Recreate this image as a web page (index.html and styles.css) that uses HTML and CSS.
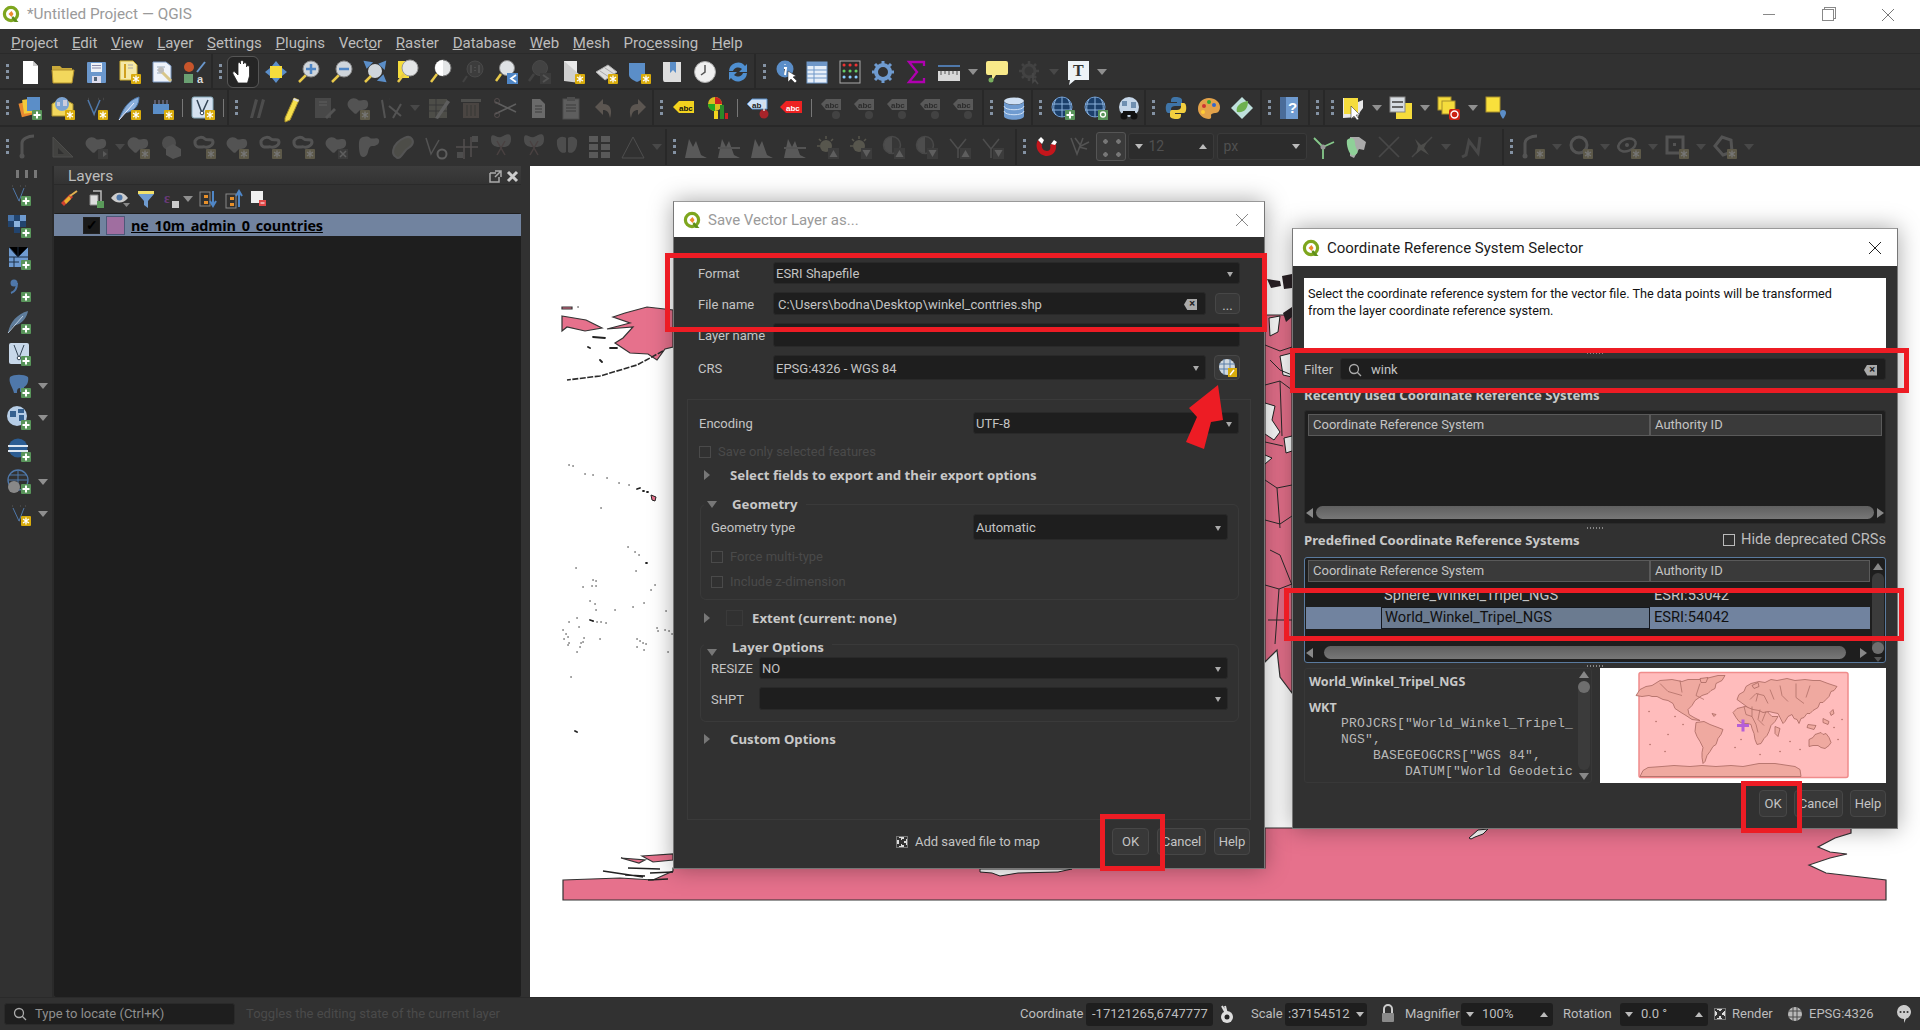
FILE: index.html
```html
<!DOCTYPE html>
<html lang="en">
<head>
<meta charset="utf-8">
<title>*Untitled Project — QGIS</title>
<link rel="stylesheet" href="styles.css">
</head>
<body>
<svg class="defs" aria-hidden="true">
<defs>
<g id="logo"><circle cx="9" cy="9" r="6.6" fill="#fff" stroke="#7ea61e" stroke-width="3.2"/><path d="M11 11l5.500 6h-4l-3-4z" fill="#5f8f1a"/><path d="M6.500 9l3-3 2 3-2 3z" fill="#ee8a2c"/></g>
<g id="bs"><rect x="14" y="14" width="10" height="10" rx="1" fill="#d9ac0c"/><path d="M19 15.500v7M16 17l6 4M22 17l-6 4" stroke="#fff" stroke-width="1.300"/></g>
<g id="bp"><rect x="14" y="14" width="10" height="10" rx="1" fill="#58945a"/><path d="M19 15.500v7M15.500 19h7" stroke="#fff" stroke-width="2"/></g>
<g id="new"><path d="M5 1h10l5 5v18H5z" fill="#fff"/><path d="M15 1l5 5h-5z" fill="#ccc"/></g>
<g id="open"><path d="M1 6h8l2 2h10v3H1z" fill="#c9a93a"/><path d="M1 10h22l-2 13H2z" fill="#f2d75c" stroke="#b3922c"/></g>
<g id="save"><rect x="3" y="2" width="19" height="21" rx="1" fill="#6a97cc"/><rect x="7" y="3" width="11" height="9" fill="#eef2f7"/><path d="M8 5.500h9M8 8h9" stroke="#88a"/><rect x="8" y="16" width="9" height="7" fill="#dde"/><rect x="10" y="17" width="3" height="4" fill="#567"/></g>
<g id="layout"><path d="M3 1h13l4 4v15H3z" fill="#f5e9a8" stroke="#d0b030"/><rect x="7" y="4" width="2" height="14" fill="#d0a020"/><path d="M11 5h5M11 8h5" stroke="#aaa"/><use href="#bs"/></g>
<g id="layoutm"><path d="M3 2h13l5 4v16H3z" fill="#eef3fb" stroke="#7a97c0"/><path d="M7 7h8M7 10h6M7 13h5" stroke="#9ab"/><path d="M10 10l11 11" stroke="#d8c68a" stroke-width="3"/><circle cx="11" cy="10" r="3" fill="#bbb"/></g>
<g id="stylem"><circle cx="6" cy="7" r="5" fill="#c7552b"/><path d="M14 12L22 2" stroke="#6a97cc" stroke-width="2"/><rect x="1" y="14" width="9" height="9" fill="#6aa072"/><text x="14" y="23" class="ict">a</text></g>
<g id="hand"><path d="M7 23l-5-9c-1-2 1-3 2-2l3 3V4c0-2 2.500-2 2.500 0V2c0-2 3-2 3 0v2c0-2 3-1.500 3 .5V7c0-2 3-1.500 3 0v9l-2 7z" fill="#fff" stroke="#222" stroke-width=".8"/></g>
<g id="pan"><rect x="6" y="6" width="12" height="12" fill="#f5dc3c"/><path d="M12 1l4 5H8zM12 23l4-5H8zM1 12l5-4v8zM23 12l-5-4v8z" fill="#5b8ec8"/></g>
<g id="zin"><path d="M9 15l-7 7" stroke="#e8c94a" stroke-width="2.500"/><circle cx="14" cy="9" r="8" fill="#cfd5db" stroke="#888"/><path d="M14 4v10M9 9h10" stroke="#4f86c6" stroke-width="2.500"/></g>
<g id="zout"><path d="M9 15l-7 7" stroke="#e8c94a" stroke-width="2.500"/><circle cx="14" cy="9" r="8" fill="#cfd5db" stroke="#888"/><path d="M9 9h10" stroke="#4f86c6" stroke-width="2.500"/></g>
<g id="zfull"><circle cx="12" cy="11" r="7" fill="#cfd5db"/><path d="M2 2l6 1-4 4zM22 2l-1 6-4-4zM22 21l-6-1 4-4z" fill="#5b8ec8" stroke="#5b8ec8" stroke-width="2"/><path d="M8 16l-6 6" stroke="#e8c94a" stroke-width="2.500"/></g>
<g id="zlayer"><rect x="2" y="1" width="11" height="17" fill="#f5dc3c"/><circle cx="14" cy="8" r="8" fill="#e3e5e6" stroke="#999"/><path d="M8 14l-6 8" stroke="#e8c94a" stroke-width="2.500"/></g>
<g id="zsel"><circle cx="14" cy="8" r="8" fill="#e3e5e6" stroke="#777"/><path d="M14 0a8 8 0 0 0 0 16z" fill="#fff"/><path d="M8 14l-6 8" stroke="#e8c94a" stroke-width="2.500"/></g>
<g id="z11"><circle cx="13" cy="9" r="8" fill="#555" stroke="#777"/><path d="M5 16l-4 6" stroke="#666" stroke-width="2"/><path d="M9 5v8M13 7v1M13 10v1M17 5v8" stroke="#999" stroke-width="1.600"/></g>
<g id="zlast"><circle cx="12" cy="8" r="7.500" fill="#dfe2e5" stroke="#888"/><path d="M6 14l-5 7" stroke="#e8c94a" stroke-width="2.500"/><rect x="12" y="13" width="11" height="11" fill="#4f86c6"/><path d="M21 15l-5 3.500 5 3.500" stroke="#fff" stroke-width="1.800" fill="none"/></g>
<g id="znext"><circle cx="12" cy="8" r="7.500" fill="#666" stroke="#777"/><path d="M6 14l-5 7" stroke="#666" stroke-width="2.500"/><rect x="12" y="13" width="11" height="11" fill="#555"/><path d="M15 15l5 3.500-5 3.500" stroke="#999" stroke-width="1.800" fill="none"/></g>
<g id="mapn"><path d="M3 1h13v14H3z" fill="#e9e9e9"/><path d="M3 1v20l16 2V15" fill="#cfcfcf"/><use href="#bs"/></g>
<g id="map3"><path d="M2 12L14 5l9 7-12 8z" fill="#ddd" stroke="#aaa"/><path d="M6 11l9 6M11 8l9 6" stroke="#aaa"/><use href="#bs"/></g>
<g id="shield"><path d="M2 3h16v12c0 4-8 7-8 7s-8-3-8-7z" fill="#5b8ec8"/><use href="#bs"/></g>
<g id="book"><path d="M3 2h18v20H5c-2 0-2-2-2-4z" fill="#dedede"/><path d="M10 2h6v11l-3-3-3 3z" fill="#5b8ec8"/></g>
<g id="clock"><circle cx="12" cy="12" r="10.500" fill="#f0f0f0" stroke="#aaa"/><path d="M12 5v7l-4 3" stroke="#555" stroke-width="1.500" fill="none"/></g>
<g id="refresh"><path d="M3 11a9 9 0 0 1 16-5l2-2v8h-8l3-3a5.500 5.500 0 0 0-9 2z" fill="#4f8fd0"/><path d="M21 13a9 9 0 0 1-16 5l-2 2v-8h8l-3 3a5.500 5.500 0 0 0 9-2z" fill="#4f8fd0"/></g>
<g id="ident"><circle cx="10" cy="9" r="8.500" fill="#5b8ec8"/><path d="M10 4v.500M9 8h2l-1 7" stroke="#fff" stroke-width="2"/><path d="M13 11v11l3-3 4 4 2-2-4-4 3-1z" fill="#fff" stroke="#222" stroke-width=".5"/></g>
<g id="table"><rect x="2" y="2" width="20" height="21" fill="#e6eef8" stroke="#6f97c8"/><rect x="2" y="2" width="20" height="4" fill="#6f97c8"/><path d="M2 10h20M2 14h20M2 18h20M9 6v17" stroke="#6f97c8"/></g>
<g id="calc"><rect x="2" y="1" width="20" height="22" fill="#2b2b2b" stroke="#aaa"/><path d="M6 5h.1M12 5h.1M18 5h.1" stroke="#e33" stroke-width="3" stroke-linecap="round"/><path d="M6 11h.1M12 11h.1M18 11h.1" stroke="#6c6" stroke-width="3" stroke-linecap="round"/><path d="M6 17h.1M12 17h.1M18 17h.1" stroke="#8cf" stroke-width="3" stroke-linecap="round"/></g>
<g id="gear"><circle cx="12" cy="12" r="7" fill="none" stroke="#6f9bd0" stroke-width="4"/><path d="M12 1v5M12 18v5M1 12h5M18 12h5M4 4l4 4M16 16l4 4M4 20l4-4M16 8l4-4" stroke="#6f9bd0" stroke-width="3"/></g>
<g id="sigma"><path d="M20 6V2H5l8 10-8 10h15v-4" fill="none" stroke="#b000b0" stroke-width="2.300"/></g>
<g id="ruler"><rect x="1" y="11" width="22" height="10" fill="#d8d8d8"/><path d="M4 11v4M8 11v3M12 11v4M16 11v3M20 11v4" stroke="#555"/><path d="M1 6h22" stroke="#4f78aa" stroke-width="2"/></g>
<g id="balloon"><path d="M3 1h18a2 2 0 0 1 2 2v10a2 2 0 0 1-2 2H11l-4 6v-6H3a2 2 0 0 1-2-2V3a2 2 0 0 1 2-2z" fill="#f8e989"/><circle cx="6" cy="20" r="2.500" fill="#7ab060"/></g>
<g id="gearo"><circle cx="11" cy="11" r="6" fill="#444" stroke="#666" stroke-width="3"/><path d="M11 1v3M11 18v3M1 11h3M18 11h3M4 4l2 2M16 16l2 2M4 18l2-2M16 6l2-2" stroke="#666" stroke-width="2.500"/><path d="M15 13v9l2-2 3 4" stroke="#777" stroke-width="1.600" fill="none"/></g>
<g id="tann"><path d="M2 1h21v19H9l-6 5 1-5H2z" fill="#eef3f7"/><text x="7" y="16" class="ics">T</text></g>
<g id="stack"><rect x="2" y="6" width="13" height="14" fill="#e88830" transform="rotate(-14 8 13)"/><rect x="5" y="3" width="13" height="14" fill="#f2cb3b" transform="rotate(-8 11 10)"/><rect x="9" y="1" width="13" height="14" fill="#5b8ec8"/><use href="#bp"/></g>
<g id="gpkg"><path d="M1 8l10-6 11 6v12H1z" fill="#f2d75c" stroke="#a88f2c"/><circle cx="11" cy="8" r="7" fill="#7ca3d2"/><path d="M6 6h3v4H6zM12 4h4v6h-4z" fill="#ccd"/><use href="#bs"/></g>
<g id="vnew"><path d="M4 4l6 14 6-14" fill="none" stroke="#4f78aa" stroke-width="1.500"/><path d="M4 3h.1M14 3h.1M19 3h.1M10 19h.1" stroke="#fff" stroke-width="2.500"/><use href="#bs"/></g>
<g id="feather"><path d="M2 24C6 12 12 4 22 1c0 8-4 14-14 16" fill="#8ab0dc" stroke="#4f78aa"/><path d="M2 24L17 7" stroke="#eef"/><use href="#bs"/></g>
<g id="chip"><rect x="3" y="8" width="16" height="10" fill="#5b8ec8"/><path d="M5 4v4M9 4v4M13 4v4M17 4v4" stroke="#88a" /><use href="#bs"/></g>
<g id="vmesh"><rect x="1" y="1" width="21" height="21" rx="2" fill="#d5e2f0" stroke="#8ab"/><path d="M6 4l5 13 6-13" fill="none" stroke="#345" stroke-width="1.500"/><circle cx="11" cy="17" r="1.800" fill="#fff" stroke="#345"/><use href="#bs"/></g>
<g id="pencils"><path d="M3 22L8 3l3 1-5 18zM10 22L15 3l3 1-5 18z" fill="#888"/></g>
<g id="pencil"><path d="M5 22L14 2l5 2-9 20-5 2z" fill="#f5df4c" stroke="#a88f2c"/><path d="M14 2l5 2-1 2-5-2z" fill="#ddd"/></g>
<g id="saved"><rect x="2" y="2" width="16" height="20" fill="#777"/><path d="M6 6h8M6 9h8" stroke="#bbb"/><path d="M12 21l9-9 2 2-9 9z" fill="#999"/></g>
<g id="blob"><path d="M2 6c3-5 8-4 10-2s9-3 10 3-4 7-7 7-4 6-7 3-8-6-6-11z" fill="#999"/></g>
<g id="blobs"><use href="#blob"/><use href="#bs"/></g>
<g id="tools"><path d="M3 4h.1M10 3h.1" stroke="#999" stroke-width="2"/><path d="M3 4l3 18M14 22L22 8M10 10l12 10" stroke="#999" stroke-width="2"/></g>
<g id="edits"><rect x="2" y="3" width="18" height="19" fill="#8a8a5a"/><path d="M2 9h18M2 15h18M9 3v19" stroke="#444"/><path d="M8 22L20 4l3 2-12 17z" fill="#bbb"/></g>
<g id="del"><rect x="3" y="7" width="16" height="15" fill="#9a6a4a"/><rect x="1" y="3" width="20" height="3" fill="#8a8a7a"/><path d="M7 9v11M11 9v11M15 9v11" stroke="#443"/></g>
<g id="cut"><path d="M2 6l21 10M2 18L23 8" stroke="#bbb" stroke-width="1.500"/><circle cx="4" cy="5" r="2.500" fill="none" stroke="#c77" /><circle cx="4" cy="19" r="2.500" fill="none" stroke="#c77"/></g>
<g id="copy"><path d="M6 3h8l5 5v14H6z" fill="#ddd"/><path d="M9 10h7M9 13h7M9 16h7" stroke="#555"/></g>
<g id="paste"><rect x="4" y="3" width="16" height="20" fill="#bbb" stroke="#888"/><rect x="8" y="1" width="8" height="4" fill="#888"/><path d="M7 9h10M7 12h10M7 15h10" stroke="#555"/></g>
<g id="undo"><path d="M11 3L3 11l8 8v-5c4 0 6 2 7 8 2-6 2-14-7-14z" fill="#d89a6a"/></g>
<g id="redo"><path d="M13 3l8 8-8 8v-5c-4 0-6 2-7 8-2-6-2-14 7-14z" fill="#d89a6a"/></g>
<g id="labely"><path d="M1 11l6-6h15v12H7z" fill="#f2d21e"/><text x="7" y="15" class="icb">abc</text></g>
<g id="chart"><circle cx="10" cy="8" r="7" fill="#d8c020"/><path d="M10 1a7 7 0 0 1 7 7h-7z" fill="#c22"/><path d="M3 8a7 7 0 0 0 7 7V8z" fill="#2a2"/><rect x="9" y="15" width="4" height="8" fill="#f2d21e"/><rect x="15" y="9" width="4" height="14" fill="#2a8a2a"/><rect x="20" y="17" width="3" height="6" fill="#c22"/></g>
<g id="labelb"><path d="M1 8l5-5h15v10H6z" fill="#cfe0f4" stroke="#5b8ec8"/><text x="6" y="12" class="icc">ab</text><circle cx="18" cy="18" r="4.500" fill="#a8242a"/><path d="M18 6v9" stroke="#ddd" stroke-width="1.500"/></g>
<g id="labelr"><path d="M1 11l6-6h16v12H7z" fill="#ee2222"/><text x="7" y="15" class="icw">abc</text></g>
<g id="labeld"><path d="M1 8l5-5h15v11H6z" fill="#aaa"/><text x="5" y="12" class="icc">abc</text><circle cx="16" cy="19" r="4" fill="#666"/></g>
<g id="db"><ellipse cx="12" cy="5" rx="10" ry="3.500" fill="#cfe0f4"/><path d="M2 5v15c0 5 20 5 20 0V5c0 5-20 5-20 0z" fill="#6f9bd0"/><path d="M2 10c0 5 20 5 20 0M2 15c0 5 20 5 20 0" stroke="#cfe0f4" fill="none"/></g>
<g id="wms"><circle cx="11" cy="11" r="10" fill="#1b3f6a" stroke="#6f9bd0"/><path d="M1 8h20M1 14h20M11 1v20M5 3c-3 6-3 12 0 16M17 3c3 6 3 12 0 16" stroke="#8cb3dd" fill="none"/></g>
<g id="wmsp"><use href="#wms"/><use href="#bp"/></g>
<g id="wmsq"><use href="#wms"/><rect x="14" y="14" width="10" height="10" fill="#58945a"/><circle cx="19" cy="18.500" r="2.500" fill="none" stroke="#fff" stroke-width="1.300"/></g>
<g id="wbin"><circle cx="12" cy="11" r="10" fill="#c5d6e8"/><path d="M5 5h5v5H5zM14 6h5v6h-5z" fill="#6f8fb0"/><circle cx="7" cy="20" r="3.500" fill="#111"/><circle cx="17" cy="20" r="3.500" fill="#111"/><rect x="6" y="15" width="12" height="4" fill="#111"/></g>
<g id="python"><path d="M12 1c-5 0-5 2-5 5h6v1H4c-3 0-3 10 0 10h3v-4c0-2 2-3 4-3h5c2 0 2-2 2-3V4c0-2-3-3-6-3z" fill="#3f75a8"/><path d="M12 23c5 0 5-2 5-5h-6v-1h9c3 0 3-10 0-10h-3v4c0 2-2 3-4 3H8c-2 0-2 2-2 3v3c0 2 3 3 6 3z" fill="#f2cf3f"/></g>
<g id="palette"><path d="M12 2C5 2 1 7 1 13s6 10 11 10c3 0 2-3 2-4s2-2 4-2 5-1 5-6c0-5-5-9-11-9z" fill="#e2a24a"/><circle cx="7" cy="10" r="2" fill="#c33"/><circle cx="12" cy="6" r="2" fill="#3a3"/><circle cx="17" cy="9" r="2" fill="#36c"/><circle cx="6" cy="16" r="2" fill="#fc3"/></g>
<g id="leaf"><path d="M12 1l11 11-11 11L1 12z" fill="#bfe0dc"/><path d="M7 16c-2-6 4-10 11-11 0 7-3 12-11 11z" fill="#6db04f"/></g>
<g id="help"><rect x="0" y="1" width="7" height="22" fill="#4a6c99"/><rect x="6" y="1" width="12" height="22" fill="#6f9bd0"/><text x="8" y="17" class="icw2">?</text></g>
<g id="selt"><path d="M2 2h15v4l5-2v8l-3 4-2 5-15 1z" fill="#e8e8e8"/><rect x="3" y="2" width="14" height="16" fill="#f5dc3c"/><path d="M10 10v13l3-3 3 4 2-1-3-4h4z" fill="#fff" stroke="#222" stroke-width=".5"/></g>
<g id="seltb"><rect x="7" y="7" width="16" height="16" fill="#f5dc3c"/><rect x="1" y="1" width="15" height="15" fill="#d8dde2" stroke="#888"/><path d="M3 6h11M3 11h11" stroke="#666" stroke-width="2"/></g>
<g id="desel"><rect x="1" y="1" width="13" height="13" fill="#f5dc3c" stroke="#a88f2c"/><rect x="5" y="5" width="13" height="13" fill="#f5dc3c" stroke="#a88f2c"/><rect x="12" y="13" width="11" height="11" rx="2" fill="#c21"/><circle cx="17.500" cy="18.500" r="3.500" fill="none" stroke="#fff" stroke-width="1.400"/></g>
<g id="selloc"><rect x="1" y="1" width="14" height="15" fill="#f9e03c" stroke="#a88f2c"/><path d="M18 14a3 3 0 0 1 3 3c0 2-3 6-3 6s-3-4-3-6a3 3 0 0 1 3-3z" fill="#5b8ec8"/></g>
<g id="dig"><path d="M4 22V8c0-4 6-7 12-7" fill="none" stroke="#999" stroke-width="3"/><circle cx="4" cy="21" r="2.500" fill="#999"/></g>
<g id="digs"><use href="#dig"/><use href="#bs"/></g>
<g id="ruler2"><path d="M2 2v20h20z" fill="#665" stroke="#887"/><path d="M7 13v6h6z" fill="#2e2e2e"/></g>
<g id="arrowb"><use href="#blob"/><rect x="14" y="14" width="10" height="10" fill="#555"/><path d="M15 19h4v-3l4 3-4 3v-3" fill="#aaa"/></g>
<g id="hexa"><circle cx="10" cy="8" r="7" fill="#888"/><path d="M14 9l8 5v7l-8 3-7-4v-7z" fill="#999"/></g>
<g id="ring"><path d="M3 6c3-5 8-4 10-2s8-1 8 3-6 6-8 5-11 3-10-6z" fill="none" stroke="#999" stroke-width="3"/><use href="#bs"/></g>
<g id="blobx"><use href="#blob"/><rect x="14" y="14" width="10" height="10" fill="#555"/><path d="M16 16l6 6M22 16l-6 6" stroke="#bbb" stroke-width="1.500"/></g>
<g id="blobsp"><path d="M3 4c3-3 8-3 10-1s8-2 9 2-3 6-6 6-4 1-5 6-5 6-7 4-3-14-1-17z" fill="#999"/></g>
<g id="bean"><path d="M6 22c-5-3-3-10 1-14s12-9 15-4-2 8-5 10-7 12-11 8z" fill="#8a8a5a" stroke="#999" stroke-width="2"/></g>
<g id="vrot"><path d="M3 3l5 16 8-14M8 19" fill="none" stroke="#999" stroke-width="1.500"/><circle cx="19" cy="19" r="4.500" fill="none" stroke="#bbb" stroke-width="2"/></g>
<g id="trim"><path d="M0 12h22M8 4v20M15 2v20" stroke="#a88" stroke-width="1.500"/><rect x="1" y="17" width="6" height="6" fill="#888"/><rect x="16" y="1" width="6" height="6" fill="#888"/></g>
<g id="scis"><path d="M2 4c0 8 6 8 10 8s10 0 10-8-6-4-10-2S2-4 2 4z" fill="#888"/><path d="M8 6l8 14M16 6L8 20" stroke="#a55" stroke-width="1.500"/></g>
<g id="merge"><path d="M2 5c3-5 8-3 9-2v14c-4 3-10-2-9-12zM22 5c-3-5-8-3-9-2v14c4 3 10-2 9-12z" fill="#888"/></g>
<g id="grid"><rect x="1" y="1" width="9" height="6" fill="#aaa"/><rect x="13" y="1" width="9" height="6" fill="#aaa"/><rect x="1" y="9" width="9" height="6" fill="#aaa"/><rect x="13" y="9" width="9" height="6" fill="#aaa"/><rect x="1" y="17" width="9" height="6" fill="#aaa"/><rect x="13" y="17" width="9" height="6" fill="#aaa"/></g>
<g id="tri"><path d="M12 2L1 23h22z" fill="none" stroke="#888"/></g>
<g id="hist"><path d="M1 23L5 4l4 8 3-6 5 14 6 3z" fill="#aaa"/></g>
<g id="histx"><use href="#hist"/><path d="M1 13h22" stroke="#999" stroke-width="2"/></g>
<g id="sun"><circle cx="10" cy="11" r="6" fill="#b2a34a"/><path d="M10 1v3M1 11h3M3 4l2 2M17 4l-2 2" stroke="#b2a34a" stroke-width="1.500"/><rect x="12" y="13" width="11" height="11" fill="#555"/><path d="M17.500 15l4 7h-8z" fill="#bbb"/></g>
<g id="sund"><use href="#sun"/><rect x="12" y="13" width="11" height="11" fill="#555"/><path d="M17.500 22l4-7h-8z" fill="#bbb"/></g>
<g id="cont"><circle cx="10" cy="10" r="8.500" fill="#444" stroke="#777" stroke-width="1.500"/><path d="M10 2a8 8 0 0 0 0 16z" fill="#888"/><rect x="12" y="13" width="11" height="11" fill="#555"/><path d="M17.500 15l4 7h-8z" fill="#bbb"/></g>
<g id="contd"><use href="#cont"/><rect x="12" y="13" width="11" height="11" fill="#555"/><path d="M17.500 22l4-7h-8z" fill="#bbb"/></g>
<g id="gamma"><path d="M2 4l8 10v9M18 4l-8 10" fill="none" stroke="#888" stroke-width="1.500"/><rect x="12" y="13" width="11" height="11" fill="#555"/><path d="M17.500 15l4 7h-8z" fill="#bbb"/></g>
<g id="gammad"><use href="#gamma"/><rect x="12" y="13" width="11" height="11" fill="#555"/><path d="M17.500 22l4-7h-8z" fill="#bbb"/></g>
<g id="magnet"><path d="M4 5c-4 7 1 16 9 16s11-9 8-14l-5 3c1 3 0 6-3 6s-6-3-5-6z" fill="#c4161c"/><path d="M4 5l4 4 2-4-3-3zM20 5l-3 4 4 1 2-3z" fill="#fff"/></g>
<g id="trace"><path d="M4 3l6 16 6-16M8 3l6 8 8-4M12 12l8 2" fill="none" stroke="#999" stroke-width="1.500"/></g>
<g id="yfork"><path d="M12 12V24M12 12L3 3M12 12l11-5" stroke="#86c98b" stroke-width="1.800"/><circle cx="12" cy="12" r="2.500" fill="#999"/></g>
<g id="split"><path d="M6 2h9l7 5-2 8-5-1-5 9-4-2z" fill="#aaa"/><path d="M3 5c3-3 8-3 8 3s6 9 0 12-9-11-8-15z" fill="#8fd098"/></g>
<g id="xx"><path d="M2 2l20 20M22 2L2 22" stroke="#777" stroke-width="1.700"/></g>
<g id="xxb"><path d="M2 22L22 2" stroke="#777" stroke-width="1.500"/><path d="M5 4l6 6 6-3-3 6 5 7-8-5-5 4 2-8z" fill="#887"/></g>
<g id="zz"><path d="M4 22l4-2 3-14 9 12 2-16" fill="none" stroke="#777" stroke-width="3"/></g>
<g id="circ"><circle cx="10" cy="10" r="8" fill="none" stroke="#999" stroke-width="3"/><use href="#bs"/></g>
<g id="ell"><ellipse cx="10" cy="10" rx="9" ry="6" fill="none" stroke="#999" stroke-width="2.500" transform="rotate(-20 10 10)"/><circle cx="10" cy="10" r="2" fill="#999"/><use href="#bs"/></g>
<g id="rect"><rect x="2" y="2" width="16" height="16" fill="none" stroke="#999" stroke-width="3"/><rect x="8" y="8" width="3" height="3" fill="#999"/><use href="#bs"/></g>
<g id="poly"><path d="M2 11l7-9 9 3 1 12-9 3z" fill="none" stroke="#999" stroke-width="3"/><use href="#bs"/></g>
<g id="l-style"><path d="M1 13l9-9 3 3-9 9z" fill="#d04030"/><path d="M4 11l5-5 2 3-5 5z" fill="#e8b030"/><path d="M10 6l7-5" stroke="#e0b050" stroke-width="2"/></g>
<g id="l-add"><path d="M4 5h8v10H4z" fill="#ddd" stroke="#888"/><path d="M7 1h8v11" fill="none" stroke="#bbb" stroke-width="1.500"/><rect x="11" y="11" width="7" height="7" fill="#5a9a5a"/></g>
<g id="l-eye"><path d="M0 8c5-7 12-7 17 0-5 6-12 6-17 0z" fill="#ccc"/><circle cx="8.500" cy="7.500" r="3" fill="#4f78aa"/><path d="M12 13h7l-3.500 4z" fill="#888"/></g>
<g id="l-fil"><path d="M1 1h16v3l-6 7v7l-4-3v-4L1 4z" fill="#6f9bd0"/><path d="M1 1h16v3H1z" fill="#f2e06a"/></g>
<g id="l-expr"><text x="2" y="13" class="icp">ε</text><rect x="10" y="11" width="7" height="7" fill="#ccc"/></g>
<g id="l-exp"><rect x="1" y="2" width="10" height="14" fill="none" stroke="#888"/><rect x="5" y="5" width="4" height="3" fill="#e8902a"/><rect x="5" y="11" width="4" height="3" fill="#e8902a"/><path d="M14 1v14M11 11l3 5 3-5" stroke="#4f86c6" stroke-width="2" fill="none"/></g>
<g id="l-col"><rect x="1" y="4" width="10" height="14" fill="none" stroke="#888"/><rect x="5" y="7" width="4" height="3" fill="#e8902a"/><rect x="5" y="13" width="4" height="3" fill="#e8902a"/><path d="M14 17V3M11 6l3-5 3 5" stroke="#4f86c6" stroke-width="2" fill="none"/></g>
<g id="l-rem"><rect x="1" y="1" width="12" height="12" fill="#eee"/><rect x="9" y="10" width="7" height="6" fill="#e04848"/><path d="M10.500 13h4" stroke="#fff"/></g>
<g id="a-pt"><path d="M6 6l6 13 5-13" fill="none" stroke="#4f78aa" stroke-width="1"/><path d="M5 4h.1M13 4h.1M18 4h.1M12 19h.1" stroke="#fff" stroke-width="2"/><use href="#bp"/></g>
<g id="a-ras"><rect x="1" y="1" width="6" height="6" fill="#4a76ac"/><rect x="7" y="1" width="6" height="6" fill="#22446e"/><rect x="13" y="1" width="6" height="6" fill="#6f9bd0"/><rect x="1" y="7" width="6" height="6" fill="#22446e"/><rect x="7" y="7" width="6" height="6" fill="#8cb3dd"/><rect x="13" y="7" width="6" height="6" fill="#22446e"/><rect x="7" y="13" width="6" height="6" fill="#22446e"/><use href="#bp"/></g>
<g id="a-mesh"><rect x="2" y="1" width="19" height="20" fill="#6f9bd0"/><path d="M2 1l9 10 10-10M11 1v10M2 11h19M2 16h10M7 11v10" stroke="#1d2f44"/><use href="#bp"/></g>
<g id="a-txt"><circle cx="7" cy="5" r="3.500" fill="#4f78aa"/><path d="M10 5c0 6-3 9-6 10" stroke="#4f78aa" stroke-width="2" fill="none"/><use href="#bp"/></g>
<g id="a-spat"><path d="M1 23C3 12 10 4 21 1c-1 6-5 13-15 15" fill="#5f7d9c"/><path d="M1 23L16 6" stroke="#bcd"/><use href="#bp"/></g>
<g id="a-vm"><rect x="2" y="1" width="20" height="21" rx="2" fill="#c8d8ea"/><path d="M7 3l5 13 5-13" fill="none" stroke="#345"/><circle cx="12" cy="16" r="1.800" fill="#fff" stroke="#345"/><use href="#bp"/></g>
<g id="a-pg"><path d="M3 3c4-3 14-3 18 0 1 4-1 9-4 10v5h-4v-4c-3 0-3 3-3 5H7c-1-5-6-11-4-16z" fill="#4f78aa"/><use href="#bp"/></g>
<g id="a-glob"><circle cx="10" cy="10" r="10" fill="#b6cde6"/><path d="M3 5h6v6H3zM11 3h6v4h-6zM12 9h5v6h-5z" fill="#35608f"/><use href="#bp"/></g>
<g id="a-wfs"><circle cx="11" cy="10" r="9.500" fill="#2c5d93"/><path d="M1 7h20v2H1zM1 12h20v2H1z" fill="#dfe8f2"/><use href="#bp"/></g>
<g id="a-wcs"><circle cx="11" cy="10" r="10" fill="none" stroke="#4f78aa" stroke-width="1.300"/><path d="M1 10h20M11 0v20M2 5h18" stroke="#4f78aa"/><circle cx="7" cy="17" r="6" fill="#888"/><use href="#bp"/></g>
<g id="a-new"><path d="M6 6l6 13 5-13" fill="none" stroke="#4f78aa" stroke-width="1"/><path d="M5 4h.1M13 4h.1M18 4h.1M12 19h.1" stroke="#fff" stroke-width="2"/><use href="#bs"/></g>
<g id="crs"><circle cx="9" cy="9" r="8" fill="#cfd8e0"/><path d="M1 6h16M1 11h16M6 1v16M12 1v16" stroke="#5b7fa8"/><rect x="10" y="10" width="9" height="9" fill="#d9ac0c"/><path d="M12 17l4-5" stroke="#fff" stroke-width="1.500"/></g>
</defs>
</svg>

<div class="app">
<header class="titlebar">
<svg class="logo"><use href="#logo"/></svg>
<span class="wintitle">*Untitled Project — QGIS</span>
<div class="winbtns">
<span class="wmin"></span>
<span class="wmax"></span>
<svg class="wclose"><path d="M1 1l12 12M13 1L1 13"/></svg>
</div>
</header>
<nav class="menu">
<span><u>P</u>roject</span><span><u>E</u>dit</span><span><u>V</u>iew</span><span><u>L</u>ayer</span><span><u>S</u>ettings</span><span><u>P</u>lugins</span><span>Vect<u>o</u>r</span><span><u>R</u>aster</span><span><u>D</u>atabase</span><span><u>W</u>eb</span><span><u>M</u>esh</span><span>Pro<u>c</u>essing</span><span><u>H</u>elp</span>
</nav>

<div class="tb t1">
<i class="h"></i><svg class="i"><use href="#new"/></svg><svg class="i"><use href="#open"/></svg><svg class="i"><use href="#save"/></svg><svg class="i"><use href="#layout"/></svg><svg class="i"><use href="#layoutm"/></svg><svg class="i"><use href="#stylem"/></svg>
<i class="sep"></i><i class="h"></i>
<svg class="i act"><use href="#hand"/></svg><svg class="i"><use href="#pan"/></svg><svg class="i"><use href="#zin"/></svg><svg class="i"><use href="#zout"/></svg><svg class="i"><use href="#zfull"/></svg><svg class="i"><use href="#zlayer"/></svg><svg class="i"><use href="#zsel"/></svg><svg class="i off"><use href="#z11"/></svg><svg class="i"><use href="#zlast"/></svg><svg class="i off"><use href="#znext"/></svg><svg class="i"><use href="#mapn"/></svg><svg class="i"><use href="#map3"/></svg><svg class="i"><use href="#shield"/></svg><svg class="i"><use href="#book"/></svg><svg class="i"><use href="#clock"/></svg><svg class="i"><use href="#refresh"/></svg>
<i class="sep"></i><i class="h m1"></i>
<svg class="i"><use href="#ident"/></svg><svg class="i m2"><use href="#table"/></svg><svg class="i"><use href="#calc"/></svg><svg class="i"><use href="#gear"/></svg><svg class="i"><use href="#sigma"/></svg><svg class="i"><use href="#ruler"/></svg><i class="d"></i><svg class="i"><use href="#balloon"/></svg><svg class="i off"><use href="#gearo"/></svg><i class="d dim"></i><svg class="i"><use href="#tann"/></svg><i class="d"></i>
</div>

<div class="tb t2">
<i class="h"></i><svg class="i"><use href="#stack"/></svg><svg class="i"><use href="#gpkg"/></svg><svg class="i"><use href="#vnew"/></svg><svg class="i"><use href="#feather"/></svg><svg class="i"><use href="#chip"/></svg><i class="t"></i><svg class="i"><use href="#vmesh"/></svg><i class="t"></i>
<i class="sep"></i><i class="h"></i>
<svg class="i off"><use href="#pencils"/></svg><svg class="i"><use href="#pencil"/></svg><svg class="i off"><use href="#saved"/></svg><svg class="i off"><use href="#blobs"/></svg><svg class="i off"><use href="#tools"/></svg><i class="d dim"></i><svg class="i off"><use href="#edits"/></svg><svg class="i off"><use href="#del"/></svg><svg class="i off"><use href="#cut"/></svg><svg class="i off"><use href="#copy"/></svg><svg class="i off"><use href="#paste"/></svg><svg class="i off"><use href="#undo"/></svg><svg class="i off"><use href="#redo"/></svg>
<i class="sep mn"></i><i class="h"></i>
<svg class="i"><use href="#labely"/></svg><svg class="i"><use href="#chart"/></svg><i class="t"></i><svg class="i"><use href="#labelb"/></svg><svg class="i"><use href="#labelr"/></svg><i class="t"></i><svg class="i off"><use href="#labeld"/></svg><svg class="i off"><use href="#labeld"/></svg><svg class="i off"><use href="#labeld"/></svg><svg class="i off"><use href="#labeld"/></svg><svg class="i off"><use href="#labeld"/></svg>
<i class="sep m2"></i><i class="h"></i>
<svg class="i"><use href="#db"/></svg>
<i class="sep m1"></i><i class="h"></i>
<svg class="i"><use href="#wmsp"/></svg><svg class="i"><use href="#wmsq"/></svg><svg class="i"><use href="#wbin"/></svg>
<i class="sep mn"></i><i class="h"></i>
<svg class="i"><use href="#python"/></svg><svg class="i"><use href="#palette"/></svg><svg class="i"><use href="#leaf"/></svg>
<i class="sep m2"></i><i class="h"></i>
<svg class="i"><use href="#help"/></svg>
<i class="sep"></i><i class="h"></i><i class="sep"></i><i class="h"></i>
<svg class="i nm"><use href="#selt"/></svg><i class="d"></i><svg class="i"><use href="#seltb"/></svg><i class="d"></i><svg class="i"><use href="#desel"/></svg><i class="d"></i><svg class="i"><use href="#selloc"/></svg>
</div>

<div class="tb t3">
<i class="h"></i><svg class="i off"><use href="#dig"/></svg><svg class="i off"><use href="#ruler2"/></svg><svg class="i off"><use href="#arrowb"/></svg><i class="d dim"></i><svg class="i off nl"><use href="#blobs"/></svg><svg class="i off"><use href="#hexa"/></svg><svg class="i off"><use href="#ring"/></svg><svg class="i off"><use href="#blobs"/></svg><svg class="i off"><use href="#ring"/></svg><svg class="i off"><use href="#ring"/></svg><svg class="i off"><use href="#blobx"/></svg><svg class="i off"><use href="#blobsp"/></svg><svg class="i off"><use href="#bean"/></svg><svg class="i off"><use href="#vrot"/></svg><svg class="i off"><use href="#trim"/></svg><svg class="i off"><use href="#scis"/></svg><svg class="i off"><use href="#scis"/></svg><svg class="i off"><use href="#merge"/></svg><svg class="i off"><use href="#grid"/></svg><svg class="i off"><use href="#tri"/></svg><i class="d dim"></i>
<i class="sep"></i><i class="h"></i>
<svg class="i off"><use href="#hist"/></svg><svg class="i off"><use href="#histx"/></svg><svg class="i off"><use href="#hist"/></svg><svg class="i off"><use href="#histx"/></svg><svg class="i off"><use href="#sun"/></svg><svg class="i off"><use href="#sund"/></svg><svg class="i off"><use href="#cont"/></svg><svg class="i off"><use href="#contd"/></svg><svg class="i off"><use href="#gamma"/></svg><svg class="i off"><use href="#gammad"/></svg>
<i class="sep m6"></i><i class="h"></i>
<svg class="i"><use href="#magnet"/></svg><svg class="i off"><use href="#trace"/></svg>
<span class="snapbtn"></span>
<span class="spin s12"><i class="dn"></i><b>12</b><i class="up"></i></span>
<span class="spin spx"><b>px</b><i class="dn push"></i></span>
<svg class="i"><use href="#yfork"/></svg><svg class="i"><use href="#split"/></svg><svg class="i off"><use href="#xx"/></svg><svg class="i off"><use href="#xxb"/></svg><i class="d dim"></i><svg class="i off"><use href="#zz"/></svg>
<i class="sep m15"></i><i class="h"></i>
<svg class="i off m3"><use href="#digs"/></svg><i class="d dim"></i><svg class="i off"><use href="#circ"/></svg><i class="d dim"></i><svg class="i off"><use href="#ell"/></svg><i class="d dim"></i><svg class="i off"><use href="#rect"/></svg><i class="d dim"></i><svg class="i off"><use href="#poly"/></svg><i class="d dim"></i>
</div>

<main class="main">
<aside class="leftbar">
<div class="lhandle"></div>
<div class="lr"><svg class="li"><use href="#a-pt"/></svg></div>
<div class="lr"><svg class="li"><use href="#a-ras"/></svg></div>
<div class="lr"><svg class="li"><use href="#a-mesh"/></svg></div>
<div class="lr"><svg class="li"><use href="#a-txt"/></svg></div>
<div class="lr"><svg class="li"><use href="#a-spat"/></svg></div>
<div class="lr"><svg class="li"><use href="#a-vm"/></svg></div>
<div class="lr"><svg class="li"><use href="#a-pg"/></svg><i class="d"></i></div>
<div class="lr"><svg class="li"><use href="#a-glob"/></svg><i class="d"></i></div>
<div class="lr"><svg class="li"><use href="#a-wfs"/></svg></div>
<div class="lr"><svg class="li"><use href="#a-wcs"/></svg><i class="d"></i></div>
<div class="lr"><svg class="li"><use href="#a-new"/></svg><i class="d"></i></div>
</aside>
<section class="panel">
<div class="ptitle"><span>Layers</span>
<svg class="pfloat"><path d="M1 3h6M1 3v9h9V7M6 1h6v6M12 1L6 7" /></svg>
<svg class="pclose"><path d="M2 2l9 9M11 2l-9 9"/></svg>
</div>
<div class="ptools">
<svg class="pi"><use href="#l-style"/></svg><svg class="pi"><use href="#l-add"/></svg><svg class="pi"><use href="#l-eye"/></svg><svg class="pi"><use href="#l-fil"/></svg><svg class="pi"><use href="#l-expr"/></svg><i class="d pd"></i><svg class="pi"><use href="#l-exp"/></svg><svg class="pi"><use href="#l-col"/></svg><svg class="pi"><use href="#l-rem"/></svg>
</div>
<div class="tree">
<div class="tnode"><span class="tcheck">✓</span><span class="tswatch"></span><span class="tname">ne_10m_admin_0_countries</span></div>
</div>
</section>
<div class="canvas">
<svg class="mapsvg" viewBox="530 166 1390 831" preserveAspectRatio="none">
<g class="land">
<path d="M613 317l12-4 22-6 26 3v37l-8 2-8 11-9-6-18-1-15-10 8-5 10-11-26 2 23-6z"/>
<path d="M562 316l24 4 16 8-17 3-18-4-5 4z"/>
<path d="M562 307h10v2h-10z"/>
<path d="M1265 315h27v378l-12-16-3-27-5 5-7 7z"/>
<path d="M563 880l57-2 33 2 20-9v-3h592v-40h586v5l-16 5-17 9 12 5 17 2-17 4-21 7 17 8 60 7v20H563z"/>
<path d="M642 856l31-2v6l-20 2z"/>
<path d="M621 858l24 2-6 3z"/>
</g>
<g class="white">
<path d="M1269 318l11-2-2 16-8 4z"/><path d="M1280 356l12-3v24l-9-2z"/><path d="M1265 403l10 3-3 14 8 12-6 8-9-6z"/><path d="M1284 438l8-2v15l-6 2z"/><path d="M1265 455l7 3-7 6z"/>
<path d="M980 869h92l-14 3-40 1-18 3-8-3-12-1z"/><path d="M1469 838l9-8 10-1-5 5-8 3-4 2z"/>
</g>
<path class="lines" d="M1265 345l15 6 12-4M1270 360l10 10 12 5M1265 385l15-4 12 9M1280 381l2 55M1265 442l18 4M1265 480l12 8 15-3M1277 488l3 40M1265 520l15 4 12-8M1270 550l10 5 12 30M1265 585l14 4 13-5M1279 589l-4 55M1268 620h24"/>
<path class="blob" d="M1267 279l13 2 1 5-10 2zM1282 276l10-2v14l-8 1zM1283 313l9-6v10l-6 5z"/>
<path class="chain" d="M663 351l-26 14-37 11-33 4"/>
<path class="dots" d="M569 465h.1M573 466h.1M585 474h.1M593 475h.1M607 478h.1M619 483h.1M629 485h.1M601 508h.1M628 547h.1M635 552h.1M639 555h.1M576 568h.1M636 571h.1M593 580h.1M596 581h.1M583 587h.1M592 586h.1M596 586h.1M655 585h.1M651 590h.1M590 601h.1M595 604h.1M596 610h.1M615 610h.1M633 607h.1M644 603h.1M666 611h.1M577 618h.1M593 621h.1M597 622h.1M601 622h.1M606 623h.1M569 622h.1M563 630h.1M566 634h.1M568 637h.1M564 639h.1M569 643h.1M568 645h.1M579 627h.1M584 638h.1M583 642h.1M581 643h.1M580 647h.1M577 652h.1M600 639h.1M657 628h.1M658 631h.1M665 630h.1M669 631h.1M672 634h.1M637 639h.1M640 641h.1M643 643h.1M646 644h.1M637 647h.1M644 650h.1M668 652h.1M571 677h.1M578 307h.1"/>
<path class="dots big" d="M637 489l3-1M643 491l1 0M647 492l1 0M646 563h1M590 620l3 1M575 731l2 1M593 337l12 1M610 348l7 0M588 347l2 1M600 360l2 2"/>
<path class="sliv" d="M628 868l32 1M650 873l23-1M603 871l40 6M625 875l20 1M648 880l20-1"/>
<path class="hawaii" d="M651 495l5 2-1 4-3-1z"/>
</svg>
</div>
</main>

<footer class="status">
<div class="locate"><svg class="sico"><circle cx="6" cy="6" r="4.500"/><path d="M9 9l4 4"/></svg><span>Type to locate (Ctrl+K)</span></div>
<span class="hint">Toggles the editing state of the current layer</span>
<div class="sright">
<span class="sl scoord">Coordinate</span>
<span class="sf fcoord">-17121265,6747777</span>
<svg class="mouse"><path d="M6 3l7 13M9 3l3 12" stroke="#ddd" stroke-width="2"/><ellipse cx="11" cy="14" rx="6" ry="6" fill="#ddd"/><circle cx="11" cy="14" r="2.500" fill="#222"/></svg>
<span class="sl sscale">Scale</span>
<span class="sf fscale">:37154512<i class="dn"></i></span>
<svg class="lock"><path d="M4 9V5a4 4 0 0 1 8 0v4" fill="none" stroke="#ccc" stroke-width="2"/><rect x="2" y="9" width="12" height="9" rx="1" fill="#8a8a8a"/></svg>
<span class="sl smag">Magnifier</span>
<span class="sf fmag"><i class="dn"></i>100%<i class="up"></i></span>
<span class="sl srot">Rotation</span>
<span class="sf frot"><i class="dn"></i>0.0 °<i class="up"></i></span>
<span class="xcheck sc"></span>
<span class="sl srend">Render</span>
<svg class="sglobe"><circle cx="8" cy="8" r="7" fill="#b8b8b8"/><path d="M1 5h14M1 11h14M6 1v14M10 1v14" stroke="#4a4a4a"/></svg>
<span class="sl sepsg">EPSG:4326</span>
<svg class="smsg"><path d="M2 8a7 7 0 1 1 9 6.700L9 19v-4a7 7 0 0 1-7-7z" fill="#ccc"/><path d="M5.500 8h.1M9 8h.1M12.500 8h.1" stroke="#333" stroke-width="2" stroke-linecap="round"/></svg>
</div>
</footer>
</div>

<section class="dlg dlg1">
<div class="dtitle"><svg class="dlogo"><use href="#logo"/></svg><span class="dt gray">Save Vector Layer as...</span><svg class="dclose gray"><path d="M1 1l12 12M13 1L1 13"/></svg></div>
<div class="dbody">
<div class="r r22"><label>Format</label><div class="cb f1">ESRI Shapefile</div></div>
<div class="r r23"><label>File name</label><div class="inp f1 pl4">C:\Users\bodna\Desktop\winkel_contries.shp<i class="clr"></i></div><span class="btn bt25">...</span></div>
<div class="r r24"><label>Layer name</label><div class="inp f1"></div></div>
<div class="r r25"><label>CRS</label><div class="cb f1">EPSG:4326 - WGS 84</div><span class="btn bt26"><svg class="crsi"><use href="#crs"/></svg></span></div>
<div class="gbox">
<div class="gr g22"><label class="gl">Encoding</label><div class="cb gcb">UTF-8</div></div>
<div class="chk dis ch1"><i class="box"></i>Save only selected features</div>
<div class="hd hd1"><i class="tr"></i>Select fields to export and their export options</div>
<fieldset class="fs fsg">
<legend class="hd"><i class="td"></i>Geometry</legend>
<div class="gr g26 gin"><label class="gl2">Geometry type</label><div class="cb gcb2">Automatic</div></div>
<div class="chk dis ch2"><i class="box"></i>Force multi-type</div>
<div class="chk dis ch2"><i class="box"></i>Include z-dimension</div>
</fieldset>
<div class="hd hd2"><i class="tr"></i><i class="ebox"></i>Extent (current: none)</div>
<fieldset class="fs fsl">
<legend class="hd lgd2"><i class="td"></i>Layer Options</legend>
<div class="gr g22 gin1"><label class="gl3">RESIZE</label><div class="cb f1 pl2">NO</div></div>
<div class="gr g23 gin8"><label class="gl3">SHPT</label><div class="cb f1"></div></div>
</fieldset>
<div class="hd hd3"><i class="tr"></i>Custom Options</div>
</div>
<div class="dfoot">
<span class="xcheck"></span><span class="addl">Add saved file to map</span>
<span class="btn bok">OK</span><span class="btn bcancel">Cancel</span><span class="btn bhelp">Help</span>
</div>
</div>
</section>

<section class="dlg dlg2">
<div class="dtitle dt2"><svg class="dlogo"><use href="#logo"/></svg><span class="dt">Coordinate Reference System Selector</span><svg class="dclose"><path d="M1 1l12 12M13 1L1 13"/></svg></div>
<div class="cbody">
<div class="info">Select the coordinate reference system for the vector file. The data points will be transformed<br>from the layer coordinate reference system.</div>
<div class="spl"></div>
<div class="r r22 rflt"><label class="fl">Filter</label><div class="inp f1 fin"><svg class="sico"><circle cx="6" cy="6" r="4.500"/><path d="M9 9l4 4"/></svg><span>wink</span><i class="clr"></i></div></div>
<div class="hd hrec">Recently used Coordinate Reference Systems</div>
<div class="tbl t-a">
<div class="thead"><span class="th1">Coordinate Reference System</span><span class="th2">Authority ID</span></div>
<div class="tb-empty"></div>
<div class="hs"><i class="al"></i><i class="thumb"></i><i class="ar"></i></div>
</div>
<div class="spl s8"></div>
<div class="prehd"><span class="hd">Predefined Coordinate Reference Systems</span><span class="hide"><i class="box"></i>Hide deprecated CRSs</span></div>
<div class="tbl t-b">
<div class="tbmain">
<div class="thead"><span class="th1">Coordinate Reference System</span><span class="th2">Authority ID</span></div>
<div class="trow"><span class="tc0"></span><span class="tc1">Sphere_Winkel_Tripel_NGS</span><span class="tc2">ESRI:53042</span></div>
<div class="trow sel"><span class="tc0"></span><span class="tc1 cur">World_Winkel_Tripel_NGS</span><span class="tc2">ESRI:54042</span></div>
<div class="hs hs2"><i class="al"></i><i class="thumb t2th"></i><i class="ar"></i></div>
</div>
<div class="vs"><i class="up"></i><i class="vt"></i><i class="dn"></i></div>
</div>
<div class="spl s5"></div>
<div class="detail">
<div class="wkt">
<div class="wktt">
<p class="wb">World_Winkel_Tripel_NGS</p>
<p class="wb wb2">WKT</p>
<pre>    PROJCRS["World_Winkel_Tripel_
    NGS",
        BASEGEOGCRS["WGS 84",
            DATUM["World Geodetic</pre>
</div>
<div class="vs vs2"><i class="up"></i><i class="vt vt2"></i><i class="dn"></i></div>
</div>
<div class="mini">
<svg class="minisvg" viewBox="1600 669 286 114">
<rect class="mbg" x="1639" y="673" width="209" height="105" rx="2"/>
<g class="mland">
<path d="M1640 690l6-3 6-1 8-5 12-1 10 2 6-2 12 0 6-1 12-3 7 0-3 5-6 3-1 5-4 2-3 3-6 2-7 5-3 5-4 4 1 5 5 3 6 3-8-1-6-4-5-3-6-4-2-5-5-3-5-1-6-3-5 0-3-1-7 1-6-1z"/>
<path d="M1696 723l8-1 6 3 8 3 5 2-2 5-3 4-2 6-3 2-3 5-3 4-2 6-2 2-1-6 0-5 1-5-3-6-3-5-2-5z"/>
<path d="M1733 713l4-4 8-2 8 1 6 0 7 2 3 4 3 3 6 0-3 5-4 4-2 6-2 4-3 3-3 5-4 1-2-5-1-6-2-5-1-4-3-1-5 0-4-2-3-4z"/>
<path d="M1737 700l2-5 5-3 2-5 5-3 8-2 6 1 6-3 6 1 10-2 8 2 10-1 8 1 7 0 8 3 9 3-3 4-3 1-2 5-3 3-3 3-3 0-2 5-5 3-3 3-3 0-3 4-3 1-2 5-2-4-3-1-2-4-4 2-3 5-2 2-3-6-2-4-5-1-4-1-6 1-4-2-6-1-5-2z"/>
<path d="M1809 740l4-2 2-3 6-2 2 2 3-1 3 4 2 5-2 3-4 3-4-1-3-2-5 0-4 1z"/>
<path d="M1640 777l3-6 5-3 14-1 12-1 16 1 12-1 14 1 15-1 12 1 16-3 16 0 20 3 5 3 1 7z"/>
<path d="M1775 727l5 2-2 8-3-3zM1823 719l6 3-1 3-5-2zM1808 725l8 1-2 4-7-2zM1830 713l3-3 1 4-3 2zM1752 686l6-3 1 4-5 2zM1700 679l8-1-2 5-5 0zM1712 714l4 1-2 2z"/>
</g>
<path class="mlines" d="M1744 707l2 8 6 2 4 8 2 8M1752 707l0 10M1760 710l-2 10 6 6M1766 712l-4 10M1750 700l6-6 8 2 4 8M1758 694l-2 8M1770 690l4 10M1780 686l2 10 6 6M1796 684l0 14 8 6M1810 686l-4 12M1660 684l8 8 14 4M1680 681l2 12M1700 684l-4 12 8 4"/>
<path class="mdots" d="M1649 712h.1M1656 722h.1M1668 735h.1M1675 717h.1M1650 745h.1M1665 752h.1M1683 725h.1M1735 748h.1M1741 740h.1M1790 742h.1M1800 750h.1M1842 720h.1M1838 740h.1M1834 728h.1M1780 752h.1M1760 755h.1"/>
<path class="mcross" d="M1743 720v12M1737 726h12"/>
</svg>
</div>
</div>
<div class="cfoot"><span class="btn c1">OK</span><span class="btn c2">Cancel</span><span class="btn c3">Help</span></div>
</div>
</section>

<div class="rb rb1"></div>
<div class="rb rb2"></div>
<div class="rb rb3"></div>
<div class="rb rb4"></div>
<div class="rb rb5"></div>
<svg class="redarrow" viewBox="0 0 40 66"><path d="M32 0l5 35-12 2-7 27-18-7 11-25-8-9z"/></svg>
</body>
</html>
```
FILE: styles.css
```css
*{box-sizing:border-box}
html,body{margin:0;padding:0;height:1030px;overflow:hidden;background:#313131}
body{font:13px/1.2 Roboto,"Liberation Sans",sans-serif;color:#c4c4c4;position:relative}
i{font-style:normal;display:block;flex:none}
.defs{position:absolute;width:0;height:0}
.ict{font:bold 11px "Liberation Sans",sans-serif;fill:#ddd}
.ics{font:bold 16px "Liberation Serif",serif;fill:#333}
.icb{font:bold 8px "Liberation Sans",sans-serif;fill:#111}
.icc{font:bold 8px "Liberation Sans",sans-serif;fill:#222}
.icw{font:bold 8px "Liberation Sans",sans-serif;fill:#fff}
.icw2{font:bold 15px "Liberation Sans",sans-serif;fill:#fff}
.icp{font:bold 14px "Liberation Serif",serif;fill:#6a3a7a}

.app{display:flex;flex-direction:column;height:1030px}
.titlebar{height:29px;background:#fff;display:flex;align-items:center;flex:none;padding-left:2px}
.logo{width:18px;height:20px;flex:none}
.wintitle{margin-left:7px;font-size:15.300px;color:#9a9a9a}
.winbtns{margin-left:auto;display:flex;align-items:center}
.wmin{width:12px;height:1px;background:#888;margin-right:47px}
.wmax{width:12px;height:12px;border:1px solid #888;margin-right:47px;box-shadow:2px -2px 0 -1px #fff,2px -2px 0 0 #888}
.wclose{width:14px;height:14px;margin-right:25px;fill:none;stroke:#777}

.menu{height:25px;background:#313131;display:flex;align-items:center;gap:13.700px;padding:3px 0 0 11px;font-size:15px;color:#bdbdbd;flex:none;border-bottom:1px solid #2a2a2a}
.tb{background:#313131;display:flex;align-items:center;flex:none;border-bottom:2px solid #282828}
.t1{height:36px;padding-top:1px}.t2{height:37px;padding-top:1px}.t3{height:39px;border-bottom:0}
.h{width:13px;height:16px;padding-left:6px}
.h::before{content:"";display:block;width:3px;height:15px;background:repeating-linear-gradient(#8492a3 0 3px,transparent 3px 6px)}
.i{width:24px;height:24px;margin:0 4.500px;flex:none;overflow:visible}
.nm{margin-left:3px}.nl{margin-left:-1px}
.off{filter:grayscale(.7);opacity:.33}
.act{outline:1px solid #555;outline-offset:3px;border-radius:2px;background:#252525;box-shadow:0 0 0 3px #252525}
.sep{width:2px;height:36px;background:#282828;flex:none}
.m1{margin-left:1px}.m2{margin-left:2px}.m3{margin-left:4px}.m6{margin-left:5px}.m15{margin-left:15px}.mn{margin-left:-1px}
.t{width:8px;height:18px;flex:none}
.t::before{content:"";display:block;width:1px;height:18px;background:#777;margin-left:4px}
.d{width:15px;height:8px;flex:none}
.d::before{content:"";display:block;width:0;height:0;margin:1px auto 0;border:5px solid transparent;border-top:6px solid #8f8f8f;border-bottom:0}
.dim::before{border-top-color:#484848}
.snapbtn{width:30px;height:29px;border:1px solid #555;border-radius:3px;background:#3a3a3a;flex:none;background-image:radial-gradient(#777 2px,transparent 2.500px);background-size:13px 13px;background-position:2px 2px}
.spin{height:27px;border:1px solid #3a3a3a;border-radius:3px;background:#2c2c2c;display:flex;align-items:center;padding:0 6px;flex:none;font-size:14px;color:#505050}
.spin b{font-weight:400}
.s12{width:86px;margin-left:2px;gap:6px}
.spx{width:90px;margin:0 0 0 3px}
.push{margin-left:auto}
.dn{width:0;height:0;border:4px solid transparent;border-top:5px solid #bbb;border-bottom:0}
.up{width:0;height:0;border:4px solid transparent;border-bottom:5px solid #bbb;border-top:0}
.s12 .up{margin-left:auto}

.main{flex:1;display:flex;min-height:0;background:#313131}
.leftbar{width:54px;flex:none;border-right:2px solid #2a2a2a;padding-top:2px}
.lhandle{height:8px;width:24px;margin:2px 0 0 16px;background:repeating-linear-gradient(90deg,#777 0 3px,transparent 3px 9px)}
.lr{height:32px;display:flex;align-items:center;padding-left:7px}
.li{width:24px;height:24px;flex:none;overflow:visible}
.lr .d{margin-left:4px}
.panel{width:467px;flex:none;display:flex;flex-direction:column}
.ptitle{height:18px;display:flex;align-items:center;padding:2px 0 0 14px;font-size:15.500px;color:#bdbdbd;background:linear-gradient(#3d3d3d,#333)}
.pfloat{width:13px;height:13px;margin-left:auto;fill:none;stroke:#aaa;stroke-width:1.500}
.pclose{width:13px;height:13px;margin:0 2px 0 4px;fill:none;stroke:#ccc;stroke-width:3}
.ptools{height:29px;display:flex;align-items:center;padding-left:6px;border-top:1px solid #2a2a2a;gap:7.500px}
.pi{width:18px;height:18px;flex:none;overflow:visible}
.pd{width:12px;margin-left:-6px;margin-right:-2px}
.tree{flex:1;background:#1e1e1e;padding-top:1px;border-radius:2px}
.tnode{height:22px;background:#71839f;display:flex;align-items:center;padding-left:29px}
.tcheck{width:17px;height:17px;background:#1a1a1a;border:1px solid #222;color:#000;font-size:14px;line-height:15px;text-align:center;font-weight:700}
.tswatch{width:19px;height:19px;background:#a06ea0;border:1px solid #4d5878;margin-left:6px}
.tname{margin-left:6px;font:700 14.400px "Open Sans",sans-serif;color:#000;text-decoration:underline;letter-spacing:-.1px}
.canvas{flex:1;background:#fff;margin-left:9px;position:relative;min-width:0}
.mapsvg{position:absolute;left:0;top:0;width:100%;height:100%;display:block}
.land path{fill:#e6718c;stroke:#333;stroke-width:1.200}
.white path{fill:#fff;stroke:#222;stroke-width:1}
.lines{fill:none;stroke:#2a2a2a;stroke-width:1}
.blob{fill:#2a2226}
.chain{fill:none;stroke:#2a2a2a;stroke-width:1.600;stroke-dasharray:6 1.500}
.dots{fill:none;stroke:#222;stroke-width:1.300;stroke-linecap:round}
.big{stroke-width:1.800}
.sliv{fill:none;stroke:#222;stroke-width:1.500}
.hawaii{fill:#e6718c;stroke:#222}

.status{height:33px;flex:none;background:#313131;display:flex;align-items:center;padding-left:4px;border-top:1px solid #2a2a2a}
.locate{width:231px;height:22px;background:#1e1e1e;border:1px solid #2a2a2a;border-radius:3px;display:flex;align-items:center;padding-left:8px;gap:8px;color:#8f8f8f}
.sico{width:14px;height:14px;fill:none;stroke:#aaa;stroke-width:1.300;flex:none}
.hint{margin-left:11px;color:#4a4a4a}
.sright{margin-left:auto;width:900px;height:24px;display:flex;align-items:center;color:#bdbdbd}
.sl{flex:none;white-space:nowrap}
.scoord{width:66px}
.sf{height:23px;background:#1e1e1e;border-radius:3px;display:flex;align-items:center;flex:none;padding:0 5px;gap:6px}
.fcoord{width:127px;padding-left:6px}
.mouse{width:18px;height:22px;margin-left:3px;flex:none}
.sscale{margin-left:17px;width:34px}
.fscale{width:82px;padding-left:3px}
.fscale .dn{margin-left:auto}
.lock{width:16px;height:20px;margin-left:13px;flex:none}
.smag{margin-left:9px;width:56px}
.fmag{width:92px;gap:8px}
.fmag .up,.frot .up{margin-left:auto}
.srot{margin-left:10px;width:57px}
.frot{width:88px;gap:8px}
.sc{margin-left:6px}
.srend{margin-left:6px;width:40px}
.sglobe{width:16px;height:16px;margin-left:15px;flex:none}
.sepsg{margin-left:6px;width:70px}
.smsg{width:18px;height:20px;margin-left:16px;flex:none}
.xcheck{width:12px;height:12px;flex:none;border:1px solid #777;background:#ddd;background-image:linear-gradient(45deg,transparent 40%,#333 40%,#333 60%,transparent 60%),linear-gradient(-45deg,transparent 40%,#333 40%,#333 60%,transparent 60%)}

.dlg{position:absolute;background:#313131;box-shadow:0 0 22px rgba(0,0,0,.35);border:1px solid #777;border-top-color:#999}
.dlg1{left:673px;top:201px;width:592px;height:668px;display:flex;flex-direction:column}
.dlg2{left:1292px;top:228px;width:606px;height:601px;display:flex;flex-direction:column}
.dtitle{height:35px;background:#fff;display:flex;align-items:center;padding-left:9px;flex:none}
.dt2{height:37px}
.dlogo{width:18px;height:18px;flex:none}
.dt{margin-left:7px;font-size:15px;color:#1a1a1a}
.dt.gray{color:#9a9a9a}
.dclose{width:14px;height:14px;margin-left:auto;margin-right:15px;fill:none;stroke:#222;flex:none}
.dclose.gray{stroke:#888}
.dbody{flex:1;display:flex;flex-direction:column;padding-top:25px;min-height:0}
.r{display:flex;align-items:center;margin:0 24px 8px 24px;flex:none}
.r label{width:75px;flex:none;padding-top:2px}
.gr label{padding-top:2px}
.r22{height:22px}.r23{height:23px}.r24{height:24px}.r25{height:25px}
.f1{flex:1;min-width:0}
.cb{height:100%;background:#1e1e1e;border:1px solid #292929;border-radius:3px;display:flex;align-items:center;padding:2px 6px 0 2px;color:#c4c4c4}
.cb::after{content:"";margin-left:auto;width:0;height:0;border:3.500px solid transparent;border-top:5px solid #aaa;border-bottom:0}
.pl2{padding-left:2px}
.inp{height:100%;background:#1e1e1e;border:1px solid #292929;border-radius:3px;display:flex;align-items:center;padding:2px 0 0 4px;color:#c4c4c4}
.clr{margin-left:auto;margin-right:8px;width:13px;height:11px;background:#aaa;clip-path:polygon(25% 0,100% 0,100% 100%,25% 100%,0 50%);color:#222;font-size:11px;line-height:10px;text-align:right;padding-right:2px;font-weight:700}
.clr::after{content:"×"}
.btn{background:#383838;border:1px solid #474747;border-radius:4px;display:flex;align-items:center;justify-content:center;color:#c4c4c4;flex:none}
.bt25{width:25px;height:21px;margin-left:9px;padding-top:4px}
.bt26{width:26px;height:25px;margin-left:8px}
.crsi{width:19px;height:19px}
.gbox{margin:11px 13px 0;height:421px;border:1px solid #3a3a3a;padding:12px 11px 0;flex:none}
.gr{display:flex;align-items:center}
.g22{height:22px}.g23{height:23px}.g26{height:26px}
.gl{width:274px;flex:none}
.gl2{width:262px;flex:none}
.gl3{width:48px;flex:none}
.gcb{flex:1}
.gcb2{flex:1}
.gin{margin-top:2px}.gin1{margin-top:1px}.gin8{margin-top:8px}
.chk{height:16px;display:flex;align-items:center}
.chk.dis{color:#4a4a4a}
.box{width:12px;height:12px;border:1px solid #4a4a4a;flex:none;margin-right:7px}
.ch1{margin-top:10px}.ch2{margin-top:9px}
.hd{font:700 13.200px "Noto Sans",sans-serif;color:#c8c8c8;display:flex;align-items:center;height:16px}
.hd1{margin-top:7px}
.tr{width:0;height:0;border:5px solid transparent;border-left:6px solid #777;border-right:0;margin:0 20px 0 5px}
.td{width:0;height:0;border:5px solid transparent;border-top:7px solid #777;border-bottom:0;margin:0 15px 0 3px}
.fs{margin:13px 0 0;border:1px solid #3a3a3a;border-radius:6px;padding:0 10px 10px;min-width:0}
.fs legend{padding:0 8px 0 0;margin-left:-7px}
.fsg{height:104px;margin-left:1px}
.fsl{height:90px;margin-top:6px;padding-bottom:12px;margin-left:1px}
.lgd2{height:24px;padding-top:8px !important;align-items:flex-end}
.hd2{margin-top:10px}
.ebox{width:17px;height:16px;border:1px solid #3a3a3a;margin-right:9px;margin-left:-4px}
.hd3{margin-top:9px}
.dfoot{height:27px;margin-top:8px;display:flex;align-items:center;padding:0 14px 0 222px}
.addl{margin-left:7px}
.bok{width:37px;height:27px;margin-left:auto}
.bcancel{width:49px;height:27px;margin-left:8px}
.bhelp{width:36px;height:27px;margin-left:8px}

.cbody{flex:1;padding:12px 11px 0;display:flex;flex-direction:column;min-height:0}
.info{height:70px;background:#fff;color:#111;padding:7px 4px;line-height:17px;flex:none;font-size:12.700px;white-space:nowrap}
.spl{height:10px;flex:none;display:flex;justify-content:center;align-items:center}
.spl::before{content:"";width:16px;height:2px;background:repeating-linear-gradient(90deg,#888 0 1px,transparent 1px 3px)}
.s8{height:8px}.s5{height:5px}
.r.rflt{margin:0;flex:none}
.r .fl{width:36px}
.fin{padding-left:7px;gap:9px;color:#c4c4c4}
.hrec{margin-top:7px;flex:none}
.tbl{background:#1e1e1e;border:1px solid #2a2a2a;border-radius:3px;flex:none}
.t-a{height:114px;margin-top:7px;padding:3px;display:flex;flex-direction:column}
.thead{height:22px;display:flex;flex:none;background:#3a3a3a;border:1px solid #5a5a5a}
.th1{width:342px;border-right:2px solid #5a5a5a;padding:2px 4px}
.th2{flex:1;padding:2px 4px}
.tb-empty{flex:1}
.hs{height:15px;display:flex;align-items:center;flex:none;gap:3px;margin:0 -2px}
.al{width:0;height:0;border:5px solid transparent;border-right:7px solid #888;border-left:0}
.hs .ar{width:0;height:0;border:5px solid transparent;border-left:7px solid #888;border-right:0;margin-left:auto}
.thumb{flex:1;height:13px;border-radius:7px;background:linear-gradient(#5f5f5f,#777)}
.prehd{height:16px;display:flex;align-items:center;justify-content:space-between;flex:none}
.hide{display:flex;align-items:center;font-size:14.600px;color:#bdbdbd}
.hide .box{border-color:#bbb;margin-right:6px}
.t-b{height:106px;margin-top:9px;border-color:#5a7a9e;display:flex;padding:2px 0 0 1px}
.tbmain{flex:1;min-width:0;display:flex;flex-direction:column}
.t-b .thead{margin-left:2px;width:562px}
.trow{height:22px;display:flex;align-items:center;flex:none;font-size:14.700px;color:#c4c4c4}
.tbmain .trow:nth-child(2){margin-top:3px}
.sel{background:#71839f;color:#101010}
.tc0{width:75px;flex:none}
.tc1{width:269px;flex:none;padding-left:3px}
.tc2{padding-left:4px}
.cur{height:22px;background:#6b7b90;border:1px solid #14181f;display:flex;align-items:center;padding-left:3px}
.hs2{margin:16px 0 0;padding-right:3px;gap:3px}
.t2th{flex:none;width:522px;margin-left:8px}
.vs{width:15px;flex:none;display:flex;flex-direction:column;align-items:center;padding-top:3px;gap:3px}
.vs .up{border-width:5px;border-bottom-width:7px;border-bottom-color:#888;border-top-width:0}
.vs .dn{border-width:4px;border-top-width:5px;border-top-color:#555;border-bottom-width:0}
.vt{flex:1;width:12px;border-radius:6px;background:#3b3b3b;position:relative}
.vt::after{content:"";position:absolute;left:0;bottom:0;width:12px;height:12px;border-radius:6px;background:#6e6e6e}
.vt2::after{top:0;bottom:auto;height:12px}
.detail{height:115px;display:flex;gap:8px;flex:none}
.wkt{width:288px;flex:none;border:1px solid #383838;border-radius:3px;display:flex;overflow:hidden;background:#313131}
.wktt{flex:1;min-width:0;padding:5px 4px;overflow:hidden}
.wb{margin:0;font:700 12.500px/16px "Noto Sans",sans-serif;color:#c8c8c8}
.wb2{margin-top:10px}
pre{margin:0;font:13px/16px "Liberation Mono",monospace;color:#b8b8b8;letter-spacing:.2px}
.vs2{padding:2px 0}
.vs2 .dn{border-width:5px;border-top-width:7px;border-top-color:#888;border-bottom-width:0}
.mini{flex:1;background:#fff;min-width:0}
.minisvg{width:100%;height:100%;display:block}
.mbg{fill:#ffbcbc;stroke:#f08c8c;stroke-width:1.500}
.mland path{fill:#efa9a0;stroke:#a8675f;stroke-width:.8}
.mlines{fill:none;stroke:#a8675f;stroke-width:.7}
.mdots{fill:none;stroke:#a8675f;stroke-width:1.400;stroke-linecap:round}
.mcross{stroke:#b65fd8;stroke-width:3;fill:none}
.cfoot{height:27px;margin-top:7px;display:flex;justify-content:flex-end;flex:none;gap:7px}
.c1{width:28px}.c2{width:49px}.c3{width:36px}

.rb{position:absolute;border:5px solid #ed1c24}
.rb1{left:665px;top:253px;width:602px;height:79px}
.rb2{left:1100px;top:814px;width:65px;height:57px}
.rb3{left:1290px;top:348px;width:619px;height:45px}
.rb4{left:1284px;top:588px;width:620px;height:53px}
.rb5{left:1741px;top:781px;width:61px;height:52px}
.redarrow{position:absolute;left:1186px;top:385px;width:40px;height:66px}
.redarrow path{fill:#ed1c24}
```
